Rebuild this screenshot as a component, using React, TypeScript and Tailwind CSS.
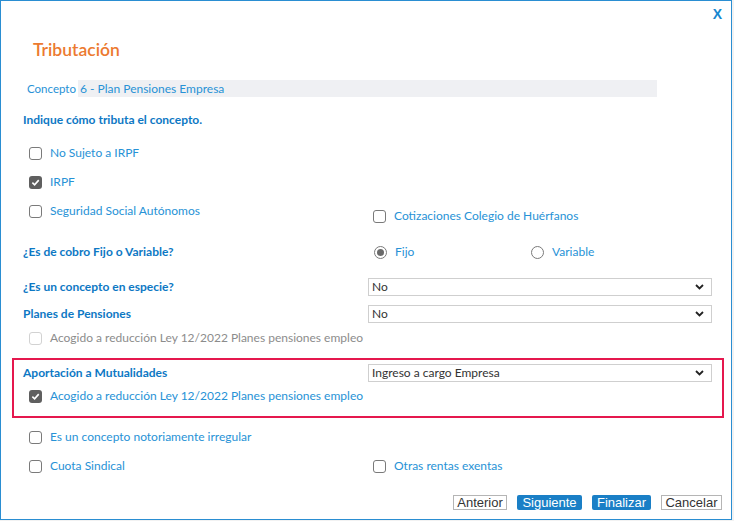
import React from "react";

const font = { fontFamily: "Lato, 'Noto Sans', sans-serif" };

const Check: React.FC<{ checked?: boolean; disabled?: boolean }> = ({ checked, disabled }) => {
  if (checked) {
    return (
      <span className="w-[13px] h-[13px] rounded-[3px] bg-[#5f5f5f] flex items-center justify-center shrink-0">
        <svg width="9" height="9" viewBox="0 0 10 10">
          <path d="M1.5 5.2 L4 7.6 L8.6 2.4" fill="none" stroke="white" strokeWidth="1.8" />
        </svg>
      </span>
    );
  }
  return (
    <span
      className={`w-[13px] h-[13px] rounded-[3px] border-[1.5px] shrink-0 bg-white ${
        disabled ? "border-[#d2d2d2]" : "border-[#7a7a7a]"
      }`}
    />
  );
};

const Radio: React.FC<{ checked?: boolean }> = ({ checked }) => (
  <span className="w-[13px] h-[13px] rounded-full border-[1.5px] border-[#7a7a7a] flex items-center justify-center shrink-0">
    {checked && <span className="w-[7px] h-[7px] rounded-full bg-[#6a6a6a]" />}
  </span>
);

const CheckLabel: React.FC<{ label: string; checked?: boolean; disabled?: boolean }> = ({
  label,
  checked,
  disabled,
}) => (
  <div className="flex items-center gap-[8px] h-[20px]">
    <Check checked={checked} disabled={disabled} />
    <span className={`text-[12px] ${disabled ? "text-[#8c8c8c]" : "text-[#2792d6]"}`}>{label}</span>
  </div>
);

const Select: React.FC<{ value: string }> = ({ value }) => (
  <div className="w-[344px] h-[18px] border border-[#cfcfcf] bg-white flex items-center justify-between pl-[3px] pr-[7px]">
    <span className="text-[12px] text-[#333]">{value}</span>
    <svg width="9" height="6" viewBox="0 0 9 6">
      <path d="M1 1 L4.5 4.5 L8 1" fill="none" stroke="#222" strokeWidth="1.8" />
    </svg>
  </div>
);

const Heading: React.FC<{ children: React.ReactNode }> = ({ children }) => (
  <span className="text-[12px] font-bold text-[#0d78c4]">{children}</span>
);

export default function App() {
  return (
    <div className="w-[734px] h-[521px] bg-[#f2f2f2]" style={font}>
      <div className="w-[732px] h-[520px] bg-white border border-[#2a8ed2] flex flex-col">
        {/* close */}
        <div className="mt-[3px] h-[20px] flex items-center justify-end pr-[9px]">
          <span className="text-[14px] font-bold text-[#1787cf]" style={{ fontFamily: "'Liberation Sans', sans-serif" }}>
            X
          </span>
        </div>

        <div className="mt-[14px] h-[24px] flex items-center pl-[32px]">
          <span className="text-[17.5px] font-semibold text-[#ec7a30]">Tributación</span>
        </div>

        <div className="mt-[18px] h-[17px] flex items-center pl-[26px]">
          <span className="text-[11.5px] text-[#2792d6] mr-[2px]">Concepto</span>
          <div className="w-[579px] h-[17px] bg-[#eff0f3] flex items-center pl-[2px]">
            <span className="text-[12px] text-[#2792d6]">6 - Plan Pensiones Empresa</span>
          </div>
        </div>

        <div className="mt-[13px] h-[20px] flex items-center pl-[22px]">
          <Heading>Indique cómo tributa el concepto.</Heading>
        </div>

        <div className="mt-[13px] pl-[28px]">
          <CheckLabel label="No Sujeto a IRPF" />
        </div>
        <div className="mt-[9px] pl-[28px]">
          <CheckLabel label="IRPF" checked />
        </div>
        <div className="mt-[9px] pl-[22px] grid grid-cols-[345px_1fr] items-start">
          <div className="pl-[6px]">
            <CheckLabel label="Seguridad Social Autónomos" />
          </div>
          <div className="pl-[5px] mt-[5px]">
            <CheckLabel label="Cotizaciones Colegio de Huérfanos" />
          </div>
        </div>

        <div className="mt-[16px] h-[20px] pl-[22px] grid grid-cols-[345px_163px_1fr] items-center">
          <Heading>¿Es de cobro Fijo o Variable?</Heading>
          <div className="flex items-center gap-[8px] pl-[6px]">
            <Radio checked />
            <span className="text-[12px] text-[#2792d6]">Fijo</span>
          </div>
          <div className="flex items-center gap-[8px]">
            <Radio />
            <span className="text-[12px] text-[#2792d6]">Variable</span>
          </div>
        </div>

        <div className="mt-[15px] h-[20px] pl-[22px] grid grid-cols-[345px_1fr] items-center">
          <Heading>¿Es un concepto en especie?</Heading>
          <Select value="No" />
        </div>

        <div className="mt-[7px] h-[20px] pl-[22px] grid grid-cols-[345px_1fr] items-center">
          <Heading>Planes de Pensiones</Heading>
          <Select value="No" />
        </div>

        <div className="mt-[4px] pl-[28px]">
          <CheckLabel label="Acogido a reducción Ley 12/2022 Planes pensiones empleo" disabled />
        </div>

        <div className="mt-[10px] ml-[11px] w-[712px] h-[60px] border-2 border-[#e5184e] pl-[9px] pt-[3px]">
          <div className="h-[20px] grid grid-cols-[345px_1fr] items-center">
            <Heading>Aportación a Mutualidades</Heading>
            <Select value="Ingreso a cargo Empresa" />
          </div>
          <div className="mt-[3px] pl-[6px]">
            <CheckLabel label="Acogido a reducción Ley 12/2022 Planes pensiones empleo" checked />
          </div>
        </div>

        <div className="mt-[9px] pl-[28px]">
          <CheckLabel label="Es un concepto notoriamente irregular" />
        </div>
        <div className="mt-[9px] pl-[22px] grid grid-cols-[345px_1fr]">
          <div className="pl-[6px]">
            <CheckLabel label="Cuota Sindical" />
          </div>
          <div className="pl-[5px]">
            <CheckLabel label="Otras rentas exentas" />
          </div>
        </div>

        <div
          className="mt-[19px] flex justify-end gap-[10px] pr-[9px] text-[13px]"
          style={{ fontFamily: "'Liberation Sans', Arial, sans-serif" }}
        >
          <button className="w-[54px] h-[15px] border border-[#b5b5b5] bg-white text-[#333] leading-none flex items-center justify-center">
            Anterior
          </button>
          <button className="w-[65px] h-[15px] bg-[#1a7fc6] rounded-[2px] text-white leading-none flex items-center justify-center">
            Siguiente
          </button>
          <button className="w-[59px] h-[15px] bg-[#1a7fc6] rounded-[2px] text-white leading-none flex items-center justify-center">
            Finalizar
          </button>
          <button className="w-[61px] h-[15px] border border-[#b5b5b5] bg-white text-[#333] leading-none flex items-center justify-center">
            Cancelar
          </button>
        </div>
      </div>
    </div>
  );
}
